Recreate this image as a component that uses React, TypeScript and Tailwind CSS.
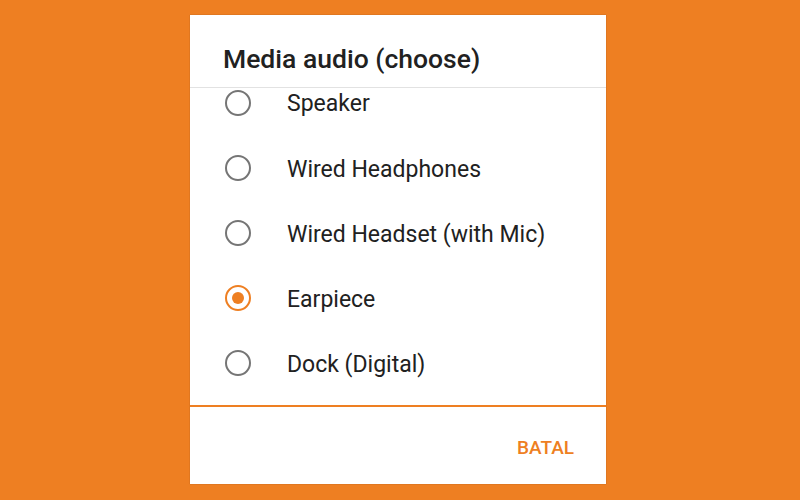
import React from 'react'

const options = [
  'Speaker',
  'Wired Headphones',
  'Wired Headset (with Mic)',
  'Earpiece',
  'Dock (Digital)',
]

function Radio({ checked }: { checked: boolean }) {
  return (
    <span
      className={
        checked
          ? 'flex h-[26px] w-[26px] items-center justify-center rounded-full border-[2.5px] border-[#ee7f22]'
          : 'flex h-[26px] w-[26px] items-center justify-center rounded-full border-[2.5px] border-[#757575]'
      }
    >
      {checked && <span className="h-[12px] w-[12px] rounded-full bg-[#ee7f22]" />}
    </span>
  )
}

export default function App() {
  const selected = 'Earpiece'

  return (
    <div
      className="h-[500px] w-[800px] bg-[#ee7f22] pt-[15px] pl-[190px]"
      style={{ fontFamily: 'Roboto, "Noto Sans", sans-serif' }}
    >
      <div className="w-[416px] h-[469px] bg-white shadow-[0_0_1px_rgba(0,0,0,0.35)] flex flex-col">
        {/* Title */}
        <div className="h-[73px] flex items-center pl-[33px] pt-[17px] border-b border-[#e2e2e2]">
          <h1 className="text-[26.5px] font-medium text-[#212121] leading-none">Media audio (choose)</h1>
        </div>

        {/* Scrolled list */}
        <div className="h-[317px] overflow-hidden">
          <div className="mt-[-18px]">
            {options.map((opt) => (
              <div key={opt} className="h-[65.2px] flex items-center pl-[35px]">
                <Radio checked={opt === selected} />
                <span className="ml-[36px] pt-[4px] text-[23px] text-[#212121]">{opt}</span>
              </div>
            ))}
          </div>
        </div>

        {/* Actions */}
        <div className="h-[2px] bg-[#ee7f22]" />
        <div className="flex-1 flex items-center justify-end pr-[32px] pt-[6px]">
          <button className="text-[19px] font-medium text-[#ee7f22]">BATAL</button>
        </div>
      </div>
    </div>
  )
}
